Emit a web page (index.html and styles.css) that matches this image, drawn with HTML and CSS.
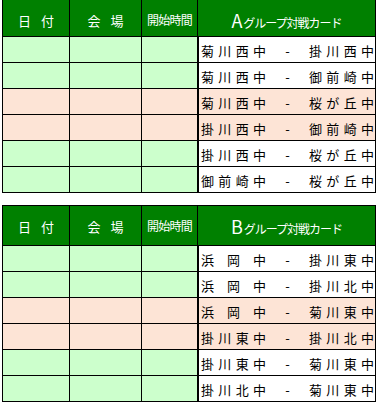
FILE: index.html
```html
<!DOCTYPE html>
<html lang="ja">
<head>
<meta charset="utf-8">
<title>グループ対戦カード</title>
<link rel="stylesheet" href="styles.css">
</head>
<body>
<div class="sheet">
  <div class="tbl tbl-a">
    <div class="hd"><span class="pair"><span>日</span><span>付</span></span></div>
    <div class="hd"><span class="pair"><span>会</span><span>場</span></span></div>
    <div class="hd small">開始時間</div>
    <div class="hd card-hd"><span class="big">A</span><span class="sub">グループ対戦カード</span></div>

    <div class="c g"></div><div class="c g"></div><div class="c g"></div>
    <div class="m w"><span class="team"><span>菊</span><span>川</span><span>西</span><span>中</span></span><span class="dash">-</span><span class="team"><span>掛</span><span>川</span><span>西</span><span>中</span></span></div>

    <div class="c g"></div><div class="c g"></div><div class="c g"></div>
    <div class="m w"><span class="team"><span>菊</span><span>川</span><span>西</span><span>中</span></span><span class="dash">-</span><span class="team"><span>御</span><span>前</span><span>崎</span><span>中</span></span></div>

    <div class="c p"></div><div class="c p"></div><div class="c p"></div>
    <div class="m p"><span class="team"><span>菊</span><span>川</span><span>西</span><span>中</span></span><span class="dash">-</span><span class="team"><span>桜</span><span>が</span><span>丘</span><span>中</span></span></div>

    <div class="c p"></div><div class="c p"></div><div class="c p"></div>
    <div class="m p"><span class="team"><span>掛</span><span>川</span><span>西</span><span>中</span></span><span class="dash">-</span><span class="team"><span>御</span><span>前</span><span>崎</span><span>中</span></span></div>

    <div class="c g"></div><div class="c g"></div><div class="c g"></div>
    <div class="m w"><span class="team"><span>掛</span><span>川</span><span>西</span><span>中</span></span><span class="dash">-</span><span class="team"><span>桜</span><span>が</span><span>丘</span><span>中</span></span></div>

    <div class="c g"></div><div class="c g"></div><div class="c g"></div>
    <div class="m w"><span class="team"><span>御</span><span>前</span><span>崎</span><span>中</span></span><span class="dash">-</span><span class="team"><span>桜</span><span>が</span><span>丘</span><span>中</span></span></div>
  </div>

  <div class="tbl tbl-b">
    <div class="hd"><span class="pair"><span>日</span><span>付</span></span></div>
    <div class="hd"><span class="pair"><span>会</span><span>場</span></span></div>
    <div class="hd small">開始時間</div>
    <div class="hd card-hd"><span class="big">B</span><span class="sub">グループ対戦カード</span></div>

    <div class="c g"></div><div class="c g"></div><div class="c g"></div>
    <div class="m w"><span class="team"><span>浜</span><span>岡</span><span>中</span></span><span class="dash">-</span><span class="team"><span>掛</span><span>川</span><span>東</span><span>中</span></span></div>

    <div class="c g"></div><div class="c g"></div><div class="c g"></div>
    <div class="m w"><span class="team"><span>浜</span><span>岡</span><span>中</span></span><span class="dash">-</span><span class="team"><span>掛</span><span>川</span><span>北</span><span>中</span></span></div>

    <div class="c p"></div><div class="c p"></div><div class="c p"></div>
    <div class="m p"><span class="team"><span>浜</span><span>岡</span><span>中</span></span><span class="dash">-</span><span class="team"><span>菊</span><span>川</span><span>東</span><span>中</span></span></div>

    <div class="c p"></div><div class="c p"></div><div class="c p"></div>
    <div class="m p"><span class="team"><span>掛</span><span>川</span><span>東</span><span>中</span></span><span class="dash">-</span><span class="team"><span>掛</span><span>川</span><span>北</span><span>中</span></span></div>

    <div class="c g"></div><div class="c g"></div><div class="c g"></div>
    <div class="m w"><span class="team"><span>掛</span><span>川</span><span>東</span><span>中</span></span><span class="dash">-</span><span class="team"><span>菊</span><span>川</span><span>東</span><span>中</span></span></div>

    <div class="c g"></div><div class="c g"></div><div class="c g"></div>
    <div class="m w"><span class="team"><span>掛</span><span>川</span><span>北</span><span>中</span></span><span class="dash">-</span><span class="team"><span>菊</span><span>川</span><span>東</span><span>中</span></span></div>
  </div>
</div>
</body>
</html>
```

FILE: styles.css
```css
html, body {
  margin: 0;
  padding: 0;
  background: #ffffff;
}

body {
  font-family: "Noto Sans CJK JP", "Noto Sans", sans-serif;
  color: #000000;
}

.sheet {
  display: flex;
  flex-direction: column;
  gap: 12px;
  padding-left: 2px;
}

.tbl {
  display: grid;
  grid-template-columns: 66px 71px 55px 177px;
  grid-auto-rows: 25px;
  gap: 1px;
  background: #000000;
  border: 1px solid #000000;
  width: max-content;
}

.tbl-a {
  border-top: 0;
  grid-template-rows: 36px;
}

.tbl-b {
  grid-template-rows: 39px;
}

.hd {
  background: #008000;
  color: #ffffff;
  display: flex;
  align-items: center;
  justify-content: center;
  font-size: 13px;
  line-height: 1;
}

.tbl-a .hd {
  padding-top: 4px;
}

.tbl-b .hd {
  padding-top: 1px;
}

.pair {
  display: flex;
  gap: 10px;
}

.hd.small {
  font-size: 12px;
  letter-spacing: -0.75px;
}

.card-hd {
  align-items: baseline;
  align-content: center;
  flex-wrap: wrap;
}

.tbl-a .card-hd {
  padding-top: 3px;
}

.big {
  font-size: 18px;
  line-height: 1;
}

.sub {
  font-size: 12px;
  letter-spacing: -1px;
  margin-left: 1px;
}

.c.g {
  background: #ccffcc;
}

.p {
  background: #fde4d6;
}

.m {
  border-left: 1px solid #000000;
  display: flex;
  align-items: center;
  padding: 2px 1px 0 2px;
  font-size: 13px;
  line-height: 1;
}

.m.w {
  background: #ffffff;
}

.team {
  width: 65px;
  display: flex;
  justify-content: space-between;
}

.dash {
  flex: 1;
  text-align: center;
}
```
